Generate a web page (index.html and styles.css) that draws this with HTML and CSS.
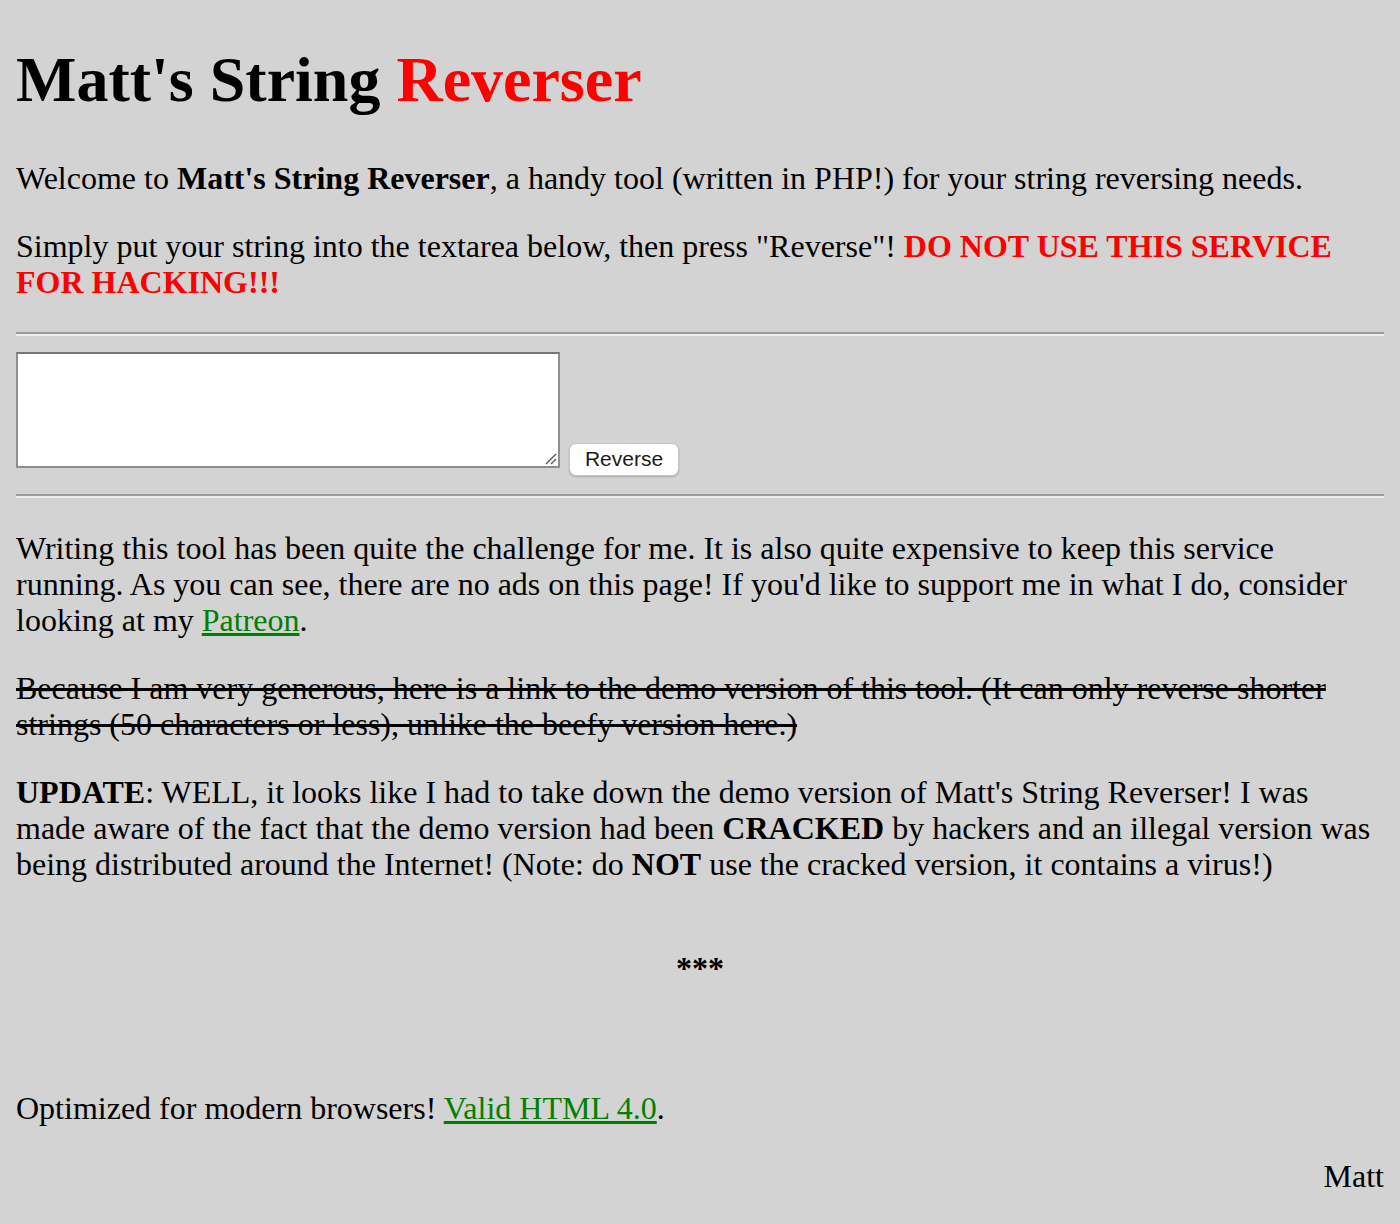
FILE: index.html
```html
<!DOCTYPE html>
<html>
<head>
<meta charset="utf-8">
<title>Matt's String Reverser</title>
<link rel="stylesheet" href="styles.css">
</head>
<body>
<h1 class="title">Matt's String <span class="red">Reverser</span></h1>
<p>Welcome to <b>Matt's String Reverser</b>, a handy tool (written in PHP!) for your string reversing needs.</p>
<p>Simply put your string into the textarea below, then press "Reverse"! <b class="red">DO NOT USE THIS SERVICE FOR HACKING!!!</b></p>
<hr class="rule">
<form class="form">
  <span class="ta-wrap">
    <textarea class="ta"></textarea>
    <svg class="grip" width="14" height="14" viewBox="0 0 14 14"><path d="M13 3 L3 13 M13 8 L8 13" stroke="#555" stroke-width="1.4" fill="none"/></svg>
  </span>
  <button type="button" class="btn">Reverse</button>
</form>
<hr class="rule">
<p>Writing this tool has been quite the challenge for me. It is also quite expensive to keep this service running. As you can see, there are no ads on this page! If you'd like to support me in what I do, consider looking at my <a class="link" href="#">Patreon</a>.</p>
<p><s>Because I am very generous, here is a link to the demo version of this tool. (It can only reverse shorter strings (50 characters or less), unlike the beefy version here.)</s></p>
<p><b>UPDATE</b>: WELL, it looks like I had to take down the demo version of Matt's String Reverser! I was made aware of the fact that the demo version had been <b>CRACKED</b> by hackers and an illegal version was being distributed around the Internet! (Note: do <b>NOT</b> use the cracked version, it contains a virus!)</p>
<p class="stars">***</p>
<p>Optimized for modern browsers! <a class="link" href="#">Valid HTML 4.0</a>.</p>
<p class="sign">Matt</p>
</body>
</html>
```
FILE: styles.css
```css
html {
  background: #d3d3d3;
}
body {
  margin: 0 16px 16px;
  padding: 0;
  font-family: "Liberation Serif", "Times New Roman", serif;
  font-size: 32px;
  line-height: 36px;
  color: #000;
  background: #d3d3d3;
}
.title {
  font-size: 64px;
  line-height: 73.6px;
  font-weight: bold;
  margin: 43px 0;
}
p {
  margin: 32px 0;
}
.red {
  color: #ff0000;
}
.rule {
  margin: 16px 0;
  height: 0;
  border: 0;
  border-top: 2px solid #9b9b9b;
  border-bottom: 2px solid #ececec;
}
.form {
  display: flex;
  align-items: flex-end;
  gap: 9px;
  padding-bottom: 2px;
}
.ta-wrap {
  position: relative;
  display: block;
  margin-bottom: 8px;
}
.ta {
  display: block;
  box-sizing: border-box;
  width: 544px;
  height: 116px;
  margin: 0;
  background: #fff;
  border: 2px solid #8e8e8e;
  border-top-color: #767676;
  resize: none;
  outline: none;
}
.grip {
  position: absolute;
  right: 3px;
  bottom: 3px;
}
.btn {
  box-sizing: border-box;
  width: 110px;
  height: 33px;
  margin: 0;
  padding: 0;
  background: #fff;
  border: 1px solid #c4c4c4;
  border-radius: 7px;
  box-shadow: 0 1px 2px rgba(0,0,0,0.2);
  font-family: "Liberation Sans", Arial, sans-serif;
  font-size: 21px;
  color: #1a1a1a;
}
.link {
  color: #008000;
  text-decoration: underline;
}
.stars {
  text-align: center;
  font-weight: bold;
  margin: 68px 0 104px;
}
.sign {
  text-align: right;
}
```
